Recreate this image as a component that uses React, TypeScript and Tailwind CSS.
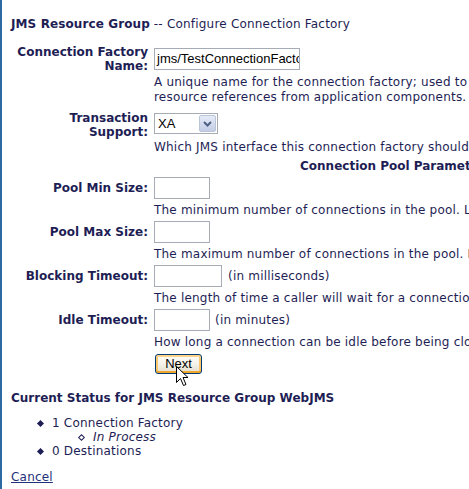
import React from "react";

const navy = "text-[#1e1e55]";

function TextInput({ width, value = "" }: { width: string; value?: string }) {
  return (
    <div
      className={`${width} h-[22px] border border-[#a5acb5] bg-white pl-[2px] overflow-hidden whitespace-nowrap font-['Liberation_Sans',Arial,sans-serif] text-[13px] leading-[20px] tracking-normal text-black`}
    >
      {value}
    </div>
  );
}

function Label({ children, twoLine }: { children: React.ReactNode; twoLine?: boolean }) {
  return (
    <div
      className={`text-right font-bold tracking-normal pr-[1px] ${
        twoLine ? "leading-[14px]" : "leading-[24px] h-[24px]"
      }`}
    >
      {children}
    </div>
  );
}

function Desc({ children }: { children: React.ReactNode }) {
  return (
    <div className="col-start-2 h-[20px] leading-[20px] whitespace-nowrap">{children}</div>
  );
}

export default function App() {
  return (
    <div
      className={`relative w-[469px] h-[489px] overflow-hidden bg-white border-l-2 border-[#2f6ba3] font-['DejaVu_Sans',Verdana,sans-serif] text-[12px] tracking-[0.2px] ${navy}`}
    >
      <div className="pl-[9px] pt-[17px] leading-[14px] whitespace-nowrap">
        <span className="font-bold tracking-[0.1px]">JMS Resource Group</span> -- Configure Connection Factory
      </div>

      <div className="grid grid-cols-[147px_1fr] gap-x-[5px] mt-[13px]">
        {/* Connection Factory Name */}
        <div className="h-[30px] pt-[1px]">
          <Label twoLine>
            Connection Factory
            <br />
            Name:
          </Label>
        </div>
        <div className="h-[30px] flex items-center">
          <TextInput width="w-[146px]" value="jms/TestConnectionFactory" />
        </div>
        <div className="col-start-2 h-[32px] pt-[1px] leading-[15px] whitespace-nowrap">
          A unique name for the connection factory; used to look up the factory and create
          <br />
          resource references from application components.
        </div>

        {/* Transaction Support */}
        <div className="h-[34px] pt-[5px]">
          <Label twoLine>
            Transaction
            <br />
            Support:
          </Label>
        </div>
        <div className="h-[34px] pt-[7px]">
          <div className="w-[64px] h-[21px] border border-[#a5acb5] bg-white flex items-center justify-between pl-[3px] pr-[1px] font-['Liberation_Sans',Arial,sans-serif] text-[13px] tracking-normal text-black">
            <span>XA</span>
            <div className="w-[17px] h-[17px] rounded-[2px] border border-[#b9c4d8] bg-gradient-to-b from-[#e6ebf7] to-[#c3cde6] flex items-center justify-center">
              <svg width="9" height="6" viewBox="0 0 9 6">
                <path d="M1 1 L4.5 4.5 L8 1" fill="none" stroke="#4d6185" strokeWidth="2" />
              </svg>
            </div>
          </div>
        </div>
        <div className="col-start-2 h-[16px] leading-[15px] whitespace-nowrap">
          Which JMS interface this connection factory should implement.
        </div>

        <div className="col-start-2 h-[20px] leading-[20px] pl-[146px] font-bold tracking-normal whitespace-nowrap">
          Connection Pool Parameters
        </div>

        {/* Pool Min */}
        <Label>Pool Min Size:</Label>
        <div className="h-[24px] flex items-center">
          <TextInput width="w-[56px]" />
        </div>
        <Desc>The minimum number of connections in the pool. Leave blank for the default.</Desc>

        {/* Pool Max */}
        <Label>Pool Max Size:</Label>
        <div className="h-[24px] flex items-center">
          <TextInput width="w-[56px]" />
        </div>
        <Desc>The maximum number of connections in the pool. Leave blank for the default.</Desc>

        {/* Blocking Timeout */}
        <Label>Blocking Timeout:</Label>
        <div className="h-[24px] flex items-center gap-[6px] whitespace-nowrap">
          <TextInput width="w-[68px]" />
          <span>(in milliseconds)</span>
        </div>
        <Desc>The length of time a caller will wait for a connection to become available.</Desc>

        {/* Idle Timeout */}
        <Label>Idle Timeout:</Label>
        <div className="h-[24px] flex items-center gap-[5px] whitespace-nowrap">
          <TextInput width="w-[56px]" />
          <span>(in minutes)</span>
        </div>
        <Desc>How long a connection can be idle before being closed.</Desc>

        <div className="col-start-2 h-[24px] pt-[2px] pl-[1px]">
          <div className="w-[47px] h-[20px] rounded-[3px] border border-[#003c74] bg-gradient-to-b from-[#fffef8] via-[#f4f2ea] to-[#e2ddcc] shadow-[inset_0_2px_0_#ffd48a,inset_0_-2px_0_#f1a62e,inset_2px_0_0_#fbc76a,inset_-2px_0_0_#fbc76a] flex items-center justify-center font-['Liberation_Sans',Arial,sans-serif] text-[13px] tracking-normal text-black">
            Next
          </div>
        </div>
      </div>

      <div className="pl-[9px] mt-[15px] leading-[14px] font-bold tracking-normal whitespace-nowrap">
        Current Status for JMS Resource Group WebJMS
      </div>

      <div className="mt-[11px] leading-[14px]">
        <div className="flex items-center pl-[36px]">
          <span className="w-[5px] h-[5px] rotate-45 bg-[#1e1e55] mr-[9px]" />
          <span>1 Connection Factory</span>
        </div>
        <div className="flex items-center pl-[77px]">
          <span className="w-[5px] h-[5px] rotate-45 border border-[#1e1e55] mr-[9px]" />
          <span className="italic">In Process</span>
        </div>
        <div className="flex items-center pl-[36px]">
          <span className="w-[5px] h-[5px] rotate-45 bg-[#1e1e55] mr-[9px]" />
          <span>0 Destinations</span>
        </div>
      </div>

      <div className="pl-[9px] mt-[12px] leading-[14px]">
        <a className="underline text-[#1f2f7a]">Cancel</a>
      </div>

      {/* mouse pointer */}
      <svg
        className="absolute left-[174px] top-[366px]"
        width="13"
        height="21"
        viewBox="0 0 13 21"
      >
        <path
          d="M0.5 0.5 L0.5 16.5 L4.5 12.5 L7.5 19.5 L10 18.5 L7 11.5 L12 11.5 Z"
          fill="white"
          stroke="black"
          strokeWidth="1"
          strokeLinejoin="miter"
        />
      </svg>
    </div>
  );
}
